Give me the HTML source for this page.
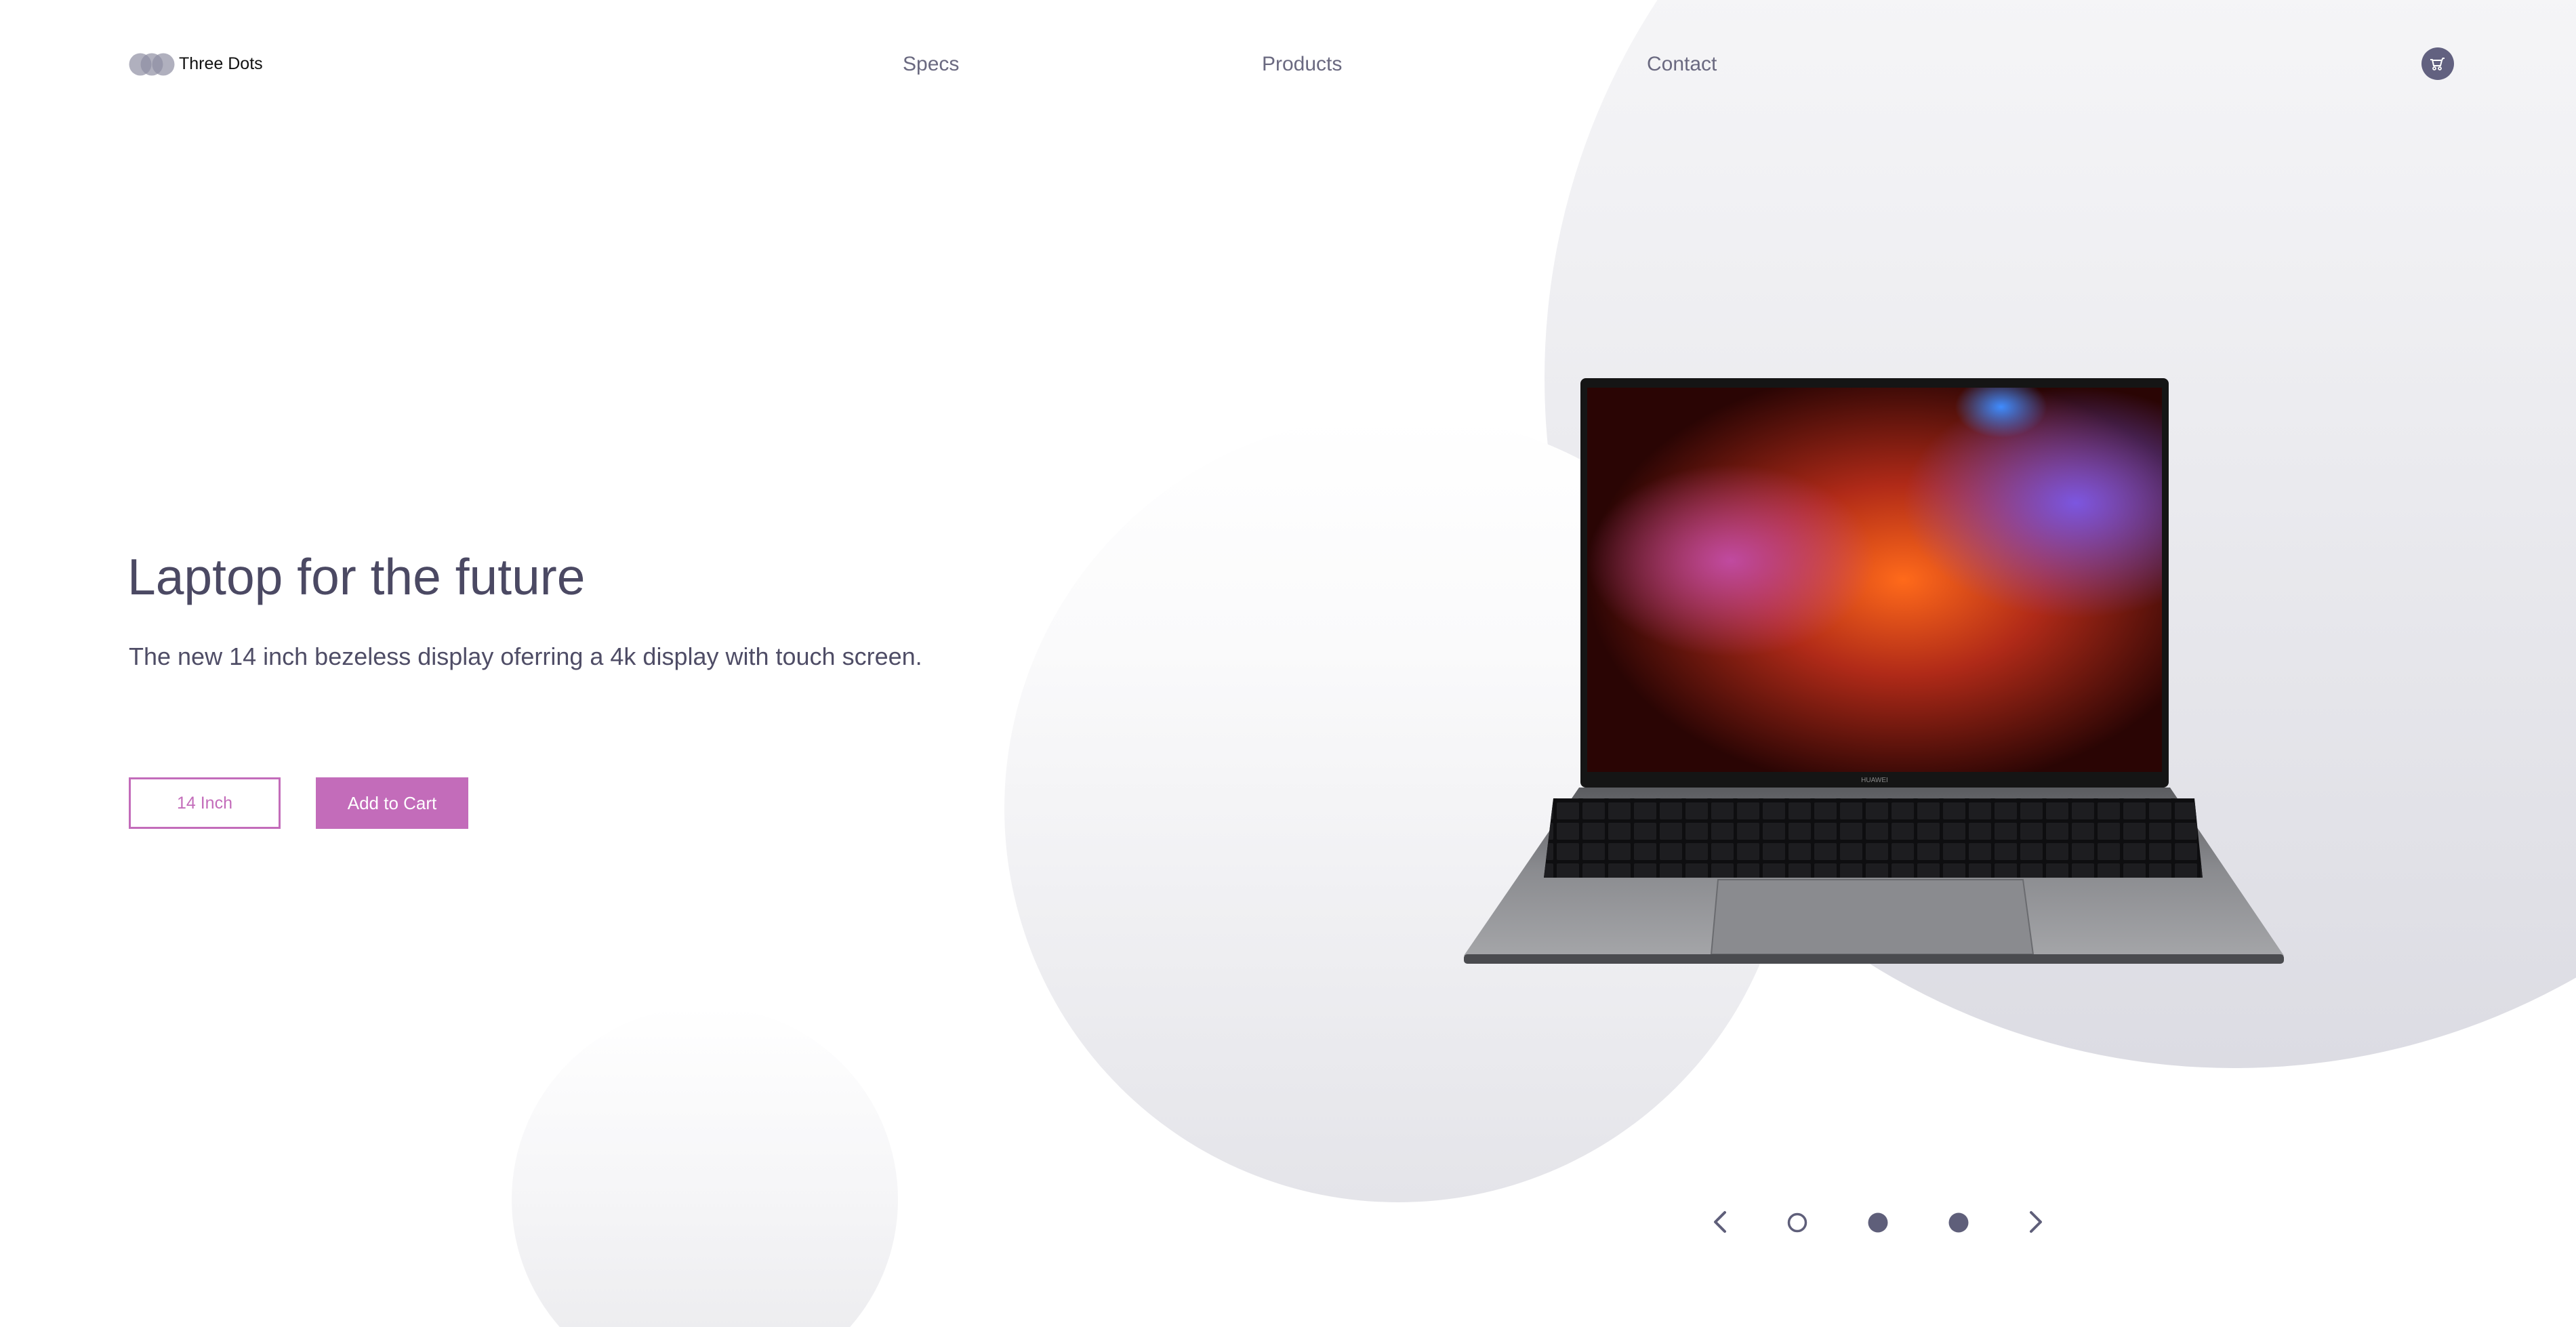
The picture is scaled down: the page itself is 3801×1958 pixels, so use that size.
<!DOCTYPE html>
<html><head><meta charset="utf-8"><style>
html,body{margin:0;padding:0;overflow:hidden;width:3801px;height:1958px;}
body{position:relative;background:#fff;font-family:"Liberation Sans",sans-serif;}
.c{position:absolute;border-radius:50%;}
.nav{position:absolute;top:78px;font-size:30px;color:#6a6980;}
</style></head><body>
<div style="position:absolute;left:0;top:0;width:3801px;height:1958px;overflow:hidden;">
<div class="c" style="left:2279px;top:-460px;width:2036px;height:2036px;background:linear-gradient(180deg,#fbfbfc 0%,#f0f0f3 40%,#dcdce3 100%);"></div>
<div class="c" style="left:1482px;top:612px;width:1162px;height:1162px;background:linear-gradient(180deg,#ffffff 0%,#fafafb 30%,#e4e4e9 100%);"></div>
<div class="c" style="left:755px;top:1485px;width:570px;height:570px;background:linear-gradient(180deg,#ffffff 0%,#f5f5f7 50%,#e9e9ec 100%);"></div>
</div>

<svg style="position:absolute;left:190px;top:78px" width="68" height="34"><circle cx="17" cy="17" r="16.5" fill="#8f8ea3" opacity=".7"/><circle cx="34" cy="17" r="16.5" fill="#8f8ea3" opacity=".7"/><circle cx="51" cy="17" r="16.5" fill="#8f8ea3" opacity=".7"/></svg>
<div style="position:absolute;left:264px;top:80px;font-size:25px;color:#111;">Three Dots</div>

<div class="nav" style="left:1332px">Specs</div>
<div class="nav" style="left:1862px">Products</div>
<div class="nav" style="left:2430px">Contact</div>

<svg style="position:absolute;left:3573px;top:70px" width="48" height="48"><circle cx="24" cy="24" r="24" fill="#626180"/><path d="M13 18h3l2 9h10l2-8h-13 M30 19l1.5-3h2.5" stroke="#fff" stroke-width="2" fill="none" stroke-linejoin="round"/><circle cx="19" cy="31" r="2" fill="none" stroke="#fff" stroke-width="1.8"/><circle cx="27" cy="31" r="2" fill="none" stroke="#fff" stroke-width="1.8"/></svg>

<div style="position:absolute;left:188px;top:808px;font-size:75px;color:#4b4963;">Laptop for the future</div>
<div style="position:absolute;left:190px;top:948px;font-size:36px;color:#4f4d66;">The new 14 inch bezeless display oferring a 4k display with touch screen.</div>

<div style="position:absolute;left:190px;top:1147px;box-sizing:border-box;width:224px;height:76px;border:3px solid #c36cba;color:#c36cba;font-size:25px;text-align:center;line-height:70px;">14 Inch</div>
<div style="position:absolute;left:466px;top:1147px;width:225px;height:76px;background:#c36cba;color:#fff;font-size:26px;text-align:center;line-height:76px;">Add to Cart</div>

<svg style="position:absolute;left:2150px;top:550px" width="1230" height="890" viewBox="2150 550 1230 890">
<defs>
<radialGradient id="g1" cx="0.55" cy="0.5" r="0.55"><stop offset="0" stop-color="#ff6a1a"/><stop offset=".45" stop-color="#b02a18"/><stop offset="1" stop-color="#2a0504"/></radialGradient>
<radialGradient id="g2" cx="0.85" cy="0.3" r="0.3"><stop offset="0" stop-color="#7c56e0"/><stop offset="1" stop-color="#7c56e0" stop-opacity="0"/></radialGradient>
<radialGradient id="g3" cx="0.25" cy="0.45" r="0.25"><stop offset="0" stop-color="#c04aa0"/><stop offset="1" stop-color="#c04aa0" stop-opacity="0"/></radialGradient>
<radialGradient id="g4" cx="0.72" cy="0.05" r="0.08"><stop offset="0" stop-color="#3f8cff"/><stop offset="1" stop-color="#3f8cff" stop-opacity="0"/></radialGradient>
<linearGradient id="base" x1="0" y1="0" x2="0" y2="1"><stop offset="0" stop-color="#5b5c60"/><stop offset=".5" stop-color="#8b8c90"/><stop offset="1" stop-color="#a4a5a8"/></linearGradient>
<pattern id="keys" width="38" height="30" patternUnits="userSpaceOnUse" x="2295" y="1182"><rect x="2" y="2" width="33" height="25" rx="2" fill="#1d1d20"/></pattern>
</defs>
<rect x="2332" y="558" width="868" height="604" rx="8" fill="#151515"/>
<rect x="2342" y="572" width="848" height="567" fill="url(#g1)"/>
<rect x="2342" y="572" width="848" height="567" fill="url(#g2)"/>
<rect x="2342" y="572" width="848" height="567" fill="url(#g3)"/>
<rect x="2342" y="572" width="848" height="567" fill="url(#g4)"/>
<text x="2766" y="1154" font-size="10" fill="#888" text-anchor="middle" font-family="Liberation Sans">HUAWEI</text>
<path d="M2330 1162 L3202 1162 L3370 1410 L2160 1410 Z" fill="url(#base)"/>
<path d="M2292 1178 L3238 1178 L3250 1295 L2278 1295 Z" fill="#0e0e10"/>
<path d="M2292 1178 L3238 1178 L3250 1295 L2278 1295 Z" fill="url(#keys)"/>
<path d="M2535 1298 L2985 1298 L3000 1408 L2525 1408 Z" fill="#8a8b8f" stroke="#6a6b6f" stroke-width="2"/>
<rect x="2160" y="1408" width="1210" height="14" rx="5" fill="#4a4b4f"/>
</svg>

<svg style="position:absolute;left:2510px;top:1782px" width="520" height="44" viewBox="2510 1782 520 44">
<path d="M2545 1789 L2531 1803 L2545 1817" stroke="#5f5f7a" stroke-width="4" fill="none" stroke-linecap="round" stroke-linejoin="round"/>
<circle cx="2652" cy="1804" r="12.5" fill="none" stroke="#5f5f7a" stroke-width="3.5"/>
<circle cx="2771" cy="1804" r="14.5" fill="#5f5f7a"/>
<circle cx="2890" cy="1804" r="14.5" fill="#5f5f7a"/>
<path d="M2997 1789 L3011 1803 L2997 1817" stroke="#5f5f7a" stroke-width="4" fill="none" stroke-linecap="round" stroke-linejoin="round"/>
</svg>
</body></html>
